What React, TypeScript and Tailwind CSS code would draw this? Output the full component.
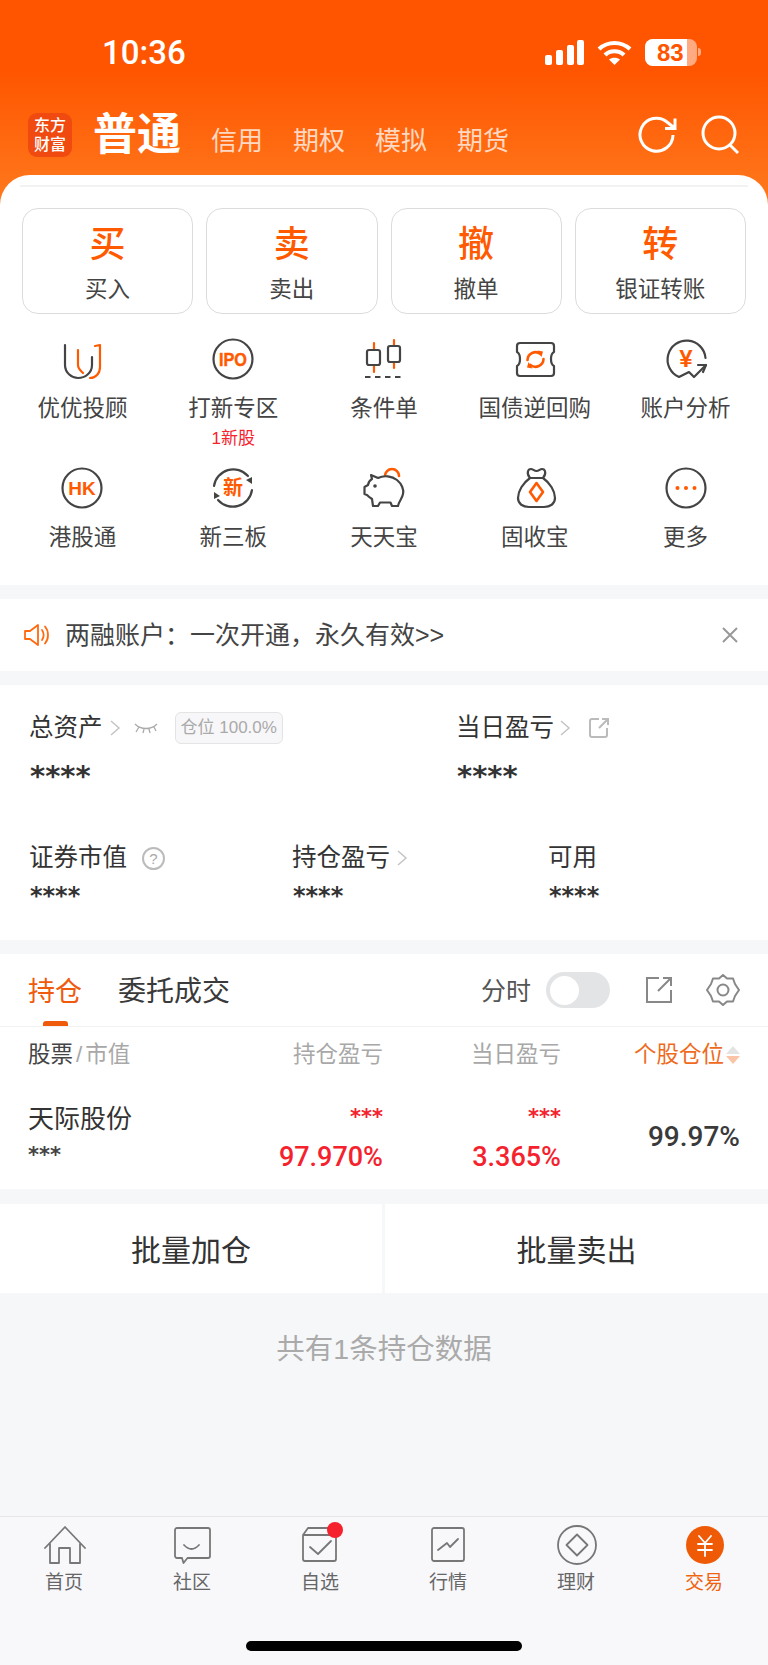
import React from 'react';

const DARK = '#444444';
const OG = '#ff5a00';

const bigActions = [
  { ch: '买', label: '买入' },
  { ch: '卖', label: '卖出' },
  { ch: '撤', label: '撤单' },
  { ch: '转', label: '银证转账' },
];

function Ico({ children, size = 44 }: { children: React.ReactNode; size?: number }) {
  return (
    <svg width={size} height={size} viewBox="0 0 44 44" fill="none" strokeLinecap="round" strokeLinejoin="round">
      {children}
    </svg>
  );
}

// 宫格图标
function IconUU() {
  return (
    <Ico>
      <path d="M5 8V28C5 36 12 41 18 41C25 41 32 36 32 28V20" stroke={DARK} strokeWidth="2.2" />
      <path d="M18 13V28C18 32 21 34 23 36" stroke={OG} strokeWidth="2.2" />
      <path d="M35 9L40 8V30C40 36 36 41 30 41" stroke={OG} strokeWidth="2.2" />
    </Ico>
  );
}
function IconIpo() {
  return (
    <Ico>
      <circle cx="22" cy="22" r="19.5" stroke={DARK} strokeWidth="2.2" />
      <text x="22" y="28.5" textAnchor="middle" fontSize="18" fontWeight="700" fill={OG} stroke={OG} strokeWidth="0.4" fontFamily="Liberation Sans" textLength="28" lengthAdjust="spacingAndGlyphs">IPO</text>
    </Ico>
  );
}
function IconCandle() {
  return (
    <Ico>
      <path d="M12 6V35M32 3V31" stroke={OG} strokeWidth="2.2" />
      <rect x="5" y="13" width="13" height="15" rx="2" fill="#fff" stroke={DARK} strokeWidth="2.2" />
      <rect x="26" y="9" width="12" height="16" rx="2" fill="#fff" stroke={DARK} strokeWidth="2.2" />
      <path d="M3 40H40" stroke={DARK} strokeWidth="2.2" strokeDasharray="5.5 4.5" strokeLinecap="butt" />
    </Ico>
  );
}
function IconTicket() {
  return (
    <Ico>
      <path d="M7 6H38a3 3 0 0 1 3 3v6c-2 1-3 4-3 7s1 6 3 7v7a3 3 0 0 1-3 3H7a3 3 0 0 1-3-3v-7c2-1 3-4 3-7s-1-6-3-7V9a3 3 0 0 1 3-3z" stroke={DARK} strokeWidth="2.2" />
      <path d="M14.5 23a8 8 0 0 1 13-6M30.5 22a8 8 0 0 1-13 6" stroke={OG} strokeWidth="2.6" />
      <path d="M24.5 13.5L30 14.5L28.5 20Z M19.5 31.5L14 30.5L15.5 25Z" fill={OG} />
    </Ico>
  );
}
function IconAccount() {
  return (
    <Ico>
      <path d="M41.5 21A19 19 0 1 0 15 40L25 35L30 40L42 28" stroke={DARK} strokeWidth="2.2" />
      <path d="M34 28H42L39 35" stroke={DARK} strokeWidth="2.2" />
      <text x="22" y="30" textAnchor="middle" fontSize="24" fontWeight="700" fill={OG} fontFamily="Liberation Sans">¥</text>
    </Ico>
  );
}
function IconHk() {
  return (
    <Ico>
      <circle cx="22" cy="22" r="19.5" stroke={DARK} strokeWidth="2.2" />
      <text x="22" y="29" textAnchor="middle" fontSize="19" fontWeight="700" fill={OG} fontFamily="Liberation Sans">HK</text>
    </Ico>
  );
}
function IconXin() {
  return (
    <Ico>
      <path d="M3 20A19.5 19.5 0 0 1 37 10M41 24A19.5 19.5 0 0 1 7 34" stroke={DARK} strokeWidth="2.2" />
      <path d="M41 11L41 18L35 14Z M3 33L3 26L9 30Z" fill={DARK} />
      <text x="22" y="29" textAnchor="middle" fontSize="20" fontWeight="700" fill={OG} fontFamily="Noto Sans CJK SC">新</text>
    </Ico>
  );
}
function IconPig() {
  return (
    <Ico>
      <path d="M23 10A7 7 0 0 1 37 10" stroke={OG} strokeWidth="2.6" />
      <path d="M9 9L16 12C22 9 30 10 35 14C40 18 42 24 41 28C40 33 37 35 36 40H30L28.5 36.5H18L16 40H11L10 33C7 31 6 30 5 29L2.5 28V21L6 19C6.5 16 8 14 10 13Z" fill="#fff" stroke={DARK} strokeWidth="2.2" />
      <circle cx="13" cy="20" r="1.8" fill={DARK} />
    </Ico>
  );
}
function IconBag() {
  return (
    <Ico>
      <path d="M17 12C13 7 15 3 18 3C20 3 21 5 23.5 5C26 5 27 3 29 3C32 3 34 7 30 12C37 17 42 25 42 32C42 38 37 41 31 41H16C10 41 5 38 5 32C5 25 10 17 17 12ZM18 12H29" stroke={DARK} strokeWidth="2.2" />
      <path d="M23.5 17L30 26L23.5 35L17 26Z" stroke={OG} strokeWidth="2.6" />
    </Ico>
  );
}
function IconMore() {
  return (
    <Ico>
      <circle cx="22" cy="22" r="19.5" stroke={DARK} strokeWidth="2.2" />
      <circle cx="13.5" cy="22" r="2" fill={OG} />
      <circle cx="22" cy="22" r="2" fill={OG} />
      <circle cx="30.5" cy="22" r="2" fill={OG} />
    </Ico>
  );
}

const gridItems = [
  { icon: <IconUU />, label: '优优投顾' },
  { icon: <IconIpo />, label: '打新专区', sub: '1新股' },
  { icon: <IconCandle />, label: '条件单' },
  { icon: <IconTicket />, label: '国债逆回购' },
  { icon: <IconAccount />, label: '账户分析' },
  { icon: <IconHk />, label: '港股通' },
  { icon: <IconXin />, label: '新三板' },
  { icon: <IconPig />, label: '天天宝' },
  { icon: <IconBag />, label: '固收宝' },
  { icon: <IconMore />, label: '更多' },
];

function Chevron() {
  return (
    <svg width="12" height="18" viewBox="0 0 12 18" fill="none" className="shrink-0">
      <path d="M2 2L10 9L2 16" stroke="#c4c4c4" strokeWidth="1.5" />
    </svg>
  );
}

function Stars({ big }: { big?: boolean }) {
  return (
    <div className={`[font-family:'DejaVu_Sans',sans-serif] font-bold text-[#333] ${big ? 'text-[29px]' : 'text-[24px]'} ml-[1px] h-[24px] leading-[24px]`}>
      ****
    </div>
  );
}

const navIcon = '#777777';
const tabs = [
  {
    label: '首页',
    icon: <path d="M3 25L23 4L43 25M8 21V40H17V25H28V40H38V21" stroke={navIcon} strokeWidth="1.8" />,
  },
  {
    label: '社区',
    icon: (
      <path d="M7 5H38a2 2 0 0 1 2 2V33a2 2 0 0 1-2 2H17.5L13.5 40L12 35H7a2 2 0 0 1-2-2V7a2 2 0 0 1 2-2zM14 22Q21.5 30 29 22" stroke={navIcon} strokeWidth="1.8" />
    ),
  },
  {
    label: '自选',
    dot: true,
    icon: (
      <path d="M5 12V36a2 2 0 0 0 2 2H36a2 2 0 0 0 2-2V12H5M5 12L10 5H32M12 24L20 31L33 18" stroke={navIcon} strokeWidth="1.8" />
    ),
  },
  {
    label: '行情',
    icon: (
      <>
        <rect x="6" y="5" width="32" height="33" rx="2" stroke={navIcon} strokeWidth="1.8" />
        <path d="M12 27L21 20L24 24L32 16" stroke={navIcon} strokeWidth="1.8" />
      </>
    ),
  },
  {
    label: '理财',
    icon: (
      <>
        <circle cx="23" cy="22" r="19" stroke={navIcon} strokeWidth="1.8" />
        <path d="M23 11.5L33.5 22L23 32.5L12.5 22Z" stroke={navIcon} strokeWidth="1.8" />
      </>
    ),
  },
  {
    label: '交易',
    active: true,
    icon: (
      <>
        <circle cx="23" cy="22" r="19" fill="#ee5a06" />
        <path d="M17 13L23 20L29 13M16 21H30M16 27H30M23 20V33" stroke="#fff" strokeWidth="1.8" />
      </>
    ),
  },
];

export default function App() {
  return (
    <div className="w-[768px] h-[1665px] flex flex-col overflow-hidden bg-[#f6f7f9] text-[#333] [font-family:'Liberation_Sans','Noto_Sans_CJK_SC',sans-serif]">
      {/* 顶部 + 宫格 */}
      <div className="bg-[linear-gradient(#ff5500_0,#ff5500_70px,#ff7a1e_205px)]">
        <div className="h-[175px] pt-[36px]">
          {/* 状态栏 */}
          <div className="h-[32px] flex items-center text-white">
            <span className="ml-[102px] mt-[2px] [font-family:Roboto,sans-serif] font-medium text-[33px] leading-[32px]">10:36</span>
            <svg className="ml-[359px]" width="39" height="25" viewBox="0 0 39 25" fill="#fff">
              <rect x="0" y="15" width="7" height="10" rx="2" />
              <rect x="11" y="10" width="7" height="15" rx="2" />
              <rect x="22" y="5" width="7" height="20" rx="2" />
              <rect x="32" y="0" width="7" height="25" rx="2" />
            </svg>
            <svg className="ml-[13px]" width="35" height="25" viewBox="0 0 35 25" fill="none" stroke="#fff" strokeWidth="4.2">
              <path d="M2 9C11 1 24 1 33 9" />
              <path d="M8 15C13 10 22 10 27 15" />
              <path d="M17.5 25L12 19.5C15 17 20 17 23 19.5Z" fill="#fff" stroke="none" />
            </svg>
            <div className="ml-[13px] w-[52px] h-[27px] rounded-[8px] bg-white/50 overflow-hidden">
              <div className="w-[42px] h-[27px] bg-white flex items-center justify-center text-[#ff5500] font-bold text-[24px] leading-[27px] pl-[9px]">83</div>
            </div>
            <div className="w-[3px] h-[8px] rounded-r-[3px] bg-white/50 ml-[1px]" />
          </div>
          {/* 导航 */}
          <div className="mt-[45px] h-[44px] flex items-center text-white">
            <div className="ml-[28px] w-[44px] h-[44px] rounded-[9px] bg-[#f04a10] flex items-center justify-center text-center text-[16px] leading-[19px] font-medium">
              东方<br />财富
            </div>
            <span className="ml-[21px] text-[44px] font-bold leading-[44px]">普通</span>
            <div className="ml-[30px] mt-[12px] flex gap-[30px] text-[26px] leading-[32px] text-white/75">
              <span>信用</span>
              <span>期权</span>
              <span>模拟</span>
              <span>期货</span>
            </div>
            <svg className="ml-auto" width="40" height="40" viewBox="0 0 40 40" fill="none" stroke="#fff" strokeWidth="3">
              <path d="M35 20A16.5 16.5 0 1 1 29 7L37 13.5M37 3.5V13.5H27" />
            </svg>
            <svg className="ml-[22px] mr-[28px]" width="40" height="40" viewBox="0 0 40 40" fill="none" stroke="#fff" strokeWidth="3">
              <circle cx="19" cy="18" r="16" />
              <path d="M30 30L38 38" />
            </svg>
          </div>
        </div>

        <div className="bg-white rounded-t-[30px] h-[410px]">
          <div className="pt-[10px]">
            <div className="h-[2px] bg-[#f2f2f2] mx-[20px]" />
          </div>
          <div className="mt-[21px] px-[22px] grid grid-cols-4 gap-[13px]">
            {bigActions.map((a) => (
              <div key={a.ch} className="h-[106px] rounded-[16px] border border-[#dcdcdc] flex flex-col items-center pt-[13px]">
                <span className="text-[36px] leading-[46px] font-medium text-[#ff5a00]">{a.ch}</span>
                <span className="mt-[7px] text-[22.5px] leading-[30px] text-[#444]">{a.label}</span>
              </div>
            ))}
          </div>
          <div className="mt-[23px] px-[7px] grid grid-cols-5 gap-y-[17px]">
            {gridItems.map((item) => (
              <div key={item.label} className="flex flex-col items-center">
                {item.icon}
                <span className="mt-[13px] text-[22.5px] leading-[30px] text-[#444]">{item.label}</span>
                {item.sub && <span className="mt-[5px] text-[17px] leading-[20px] text-[#f5222d]">{item.sub}</span>}
              </div>
            ))}
          </div>
        </div>
      </div>

      {/* 通知 */}
      <div className="mt-[14px] h-[72px] bg-white flex items-center">
        <svg className="ml-[24px]" width="26" height="24" viewBox="0 0 26 24" fill="none" stroke="#ff6a10" strokeWidth="1.8" strokeLinejoin="round">
          <path d="M1 8H6L14 2V22L6 16H1Z" />
          <path d="M18 7C20 10 20 14 18 17M21 3.5C25 8 25 16 21 20.5" strokeLinecap="round" />
        </svg>
        <span className="ml-[15px] text-[25px] leading-[34px] text-[#444]">两融账户：一次开通，永久有效&gt;&gt;</span>
        <svg className="ml-auto mr-[29px]" width="18" height="18" viewBox="0 0 18 18" stroke="#999" strokeWidth="2">
          <path d="M2 2L16 16M16 2L2 16" />
        </svg>
      </div>

      {/* 资产 */}
      <div className="mt-[14px] h-[255px] bg-white pl-[29px] pt-[26px]">
        <div className="flex">
          <div className="w-[427px]">
            <div className="h-[34px] flex items-center">
              <span className="text-[24.5px] leading-[34px]">总资产</span>
              <span className="ml-[6px]"><Chevron /></span>
              <svg className="ml-[13px]" width="24" height="12" viewBox="0 0 24 12" fill="none" stroke="#aaa" strokeWidth="1.3">
                <path d="M1 2C7 8 17 8 23 2M5 5L2 10M10 7L9 11M15 7L16 11M20 5L22 9" />
              </svg>
              <span className="ml-[17px] h-[32px] px-[5px] rounded-[6px] border border-[#e4e4e4] bg-[#f7f7f9] text-[#aaa] text-[17px] leading-[30px]">仓位 100.0%</span>
            </div>
            <div className="mt-[19px]"><Stars big /></div>
          </div>
          <div>
            <div className="h-[34px] flex items-center">
              <span className="text-[24.5px] leading-[34px]">当日盈亏</span>
              <span className="ml-[5px]"><Chevron /></span>
              <svg className="ml-[17px]" width="22" height="22" viewBox="0 0 22 22" fill="none" stroke="#bbb" strokeWidth="2">
                <path d="M11 2H4a2 2 0 0 0-2 2V18a2 2 0 0 0 2 2H17a2 2 0 0 0 2-2V11M11 11L20 2M14 2H20V8" />
              </svg>
            </div>
            <div className="mt-[19px]"><Stars big /></div>
          </div>
        </div>
        <div className="mt-[53px] flex">
          <div className="w-[263px]">
            <div className="h-[34px] flex items-center">
              <span className="text-[24.5px] leading-[34px]">证券市值</span>
              <span className="ml-[15px] w-[23px] h-[23px] rounded-full border-2 border-[#bbb] text-[#aaa] text-[15px] leading-[19px] text-center">?</span>
            </div>
            <div className="mt-[9px]"><Stars /></div>
          </div>
          <div className="w-[256px]">
            <div className="h-[34px] flex items-center">
              <span className="text-[24.5px] leading-[34px]">持仓盈亏</span>
              <span className="ml-[6px]"><Chevron /></span>
            </div>
            <div className="mt-[9px]"><Stars /></div>
          </div>
          <div>
            <div className="h-[34px] flex items-center text-[24.5px] leading-[34px]">可用</div>
            <div className="mt-[9px]"><Stars /></div>
          </div>
        </div>
      </div>

      {/* 持仓 */}
      <div className="mt-[14px] bg-white h-[235px]">
        <div className="h-[73px] border-b border-[#f2f2f2] flex items-center pl-[28px] pr-[28px] relative">
          <span className="mt-[3px] text-[27px] leading-[36px] text-[#ef5a0c]">持仓</span>
          <span className="mt-[3px] ml-[36px] text-[28px] leading-[36px] text-[#3a3a3a]">委托成交</span>
          <span className="mt-[1px] ml-auto text-[25px] leading-[36px] text-[#555]">分时</span>
          <div className="ml-[15px] w-[64px] h-[36px] rounded-full bg-[#e3e4e6] flex items-center pl-[4px]">
            <div className="w-[29px] h-[29px] rounded-full bg-white" />
          </div>
          <svg className="ml-[35px]" width="28" height="28" viewBox="0 0 28 28" fill="none" stroke="#888" strokeWidth="2">
            <path d="M14 2H2V26H26V14M13 15L26 2M18 2H26V10" />
          </svg>
          <svg className="ml-[33px]" width="34" height="32" viewBox="0 0 34 32" fill="none" stroke="#888" strokeWidth="2" strokeLinejoin="round">
            <path d="M17 1L21 4.5H27L29 10L33 16L29 22L27 27.5H21L17 31L13 27.5H7L5 22L1 16L5 10L7 4.5H13Z" />
            <circle cx="17" cy="16" r="5.5" />
          </svg>
          <div className="absolute left-[43px] bottom-0 w-[25px] h-[5px] rounded-t-[3px] bg-[#ef5a0c]" />
        </div>
        <div className="pt-[11px] px-[28px] grid grid-cols-[150px_205px_178px_179px] text-[22.5px] leading-[34px] text-[#a8a8a8]">
          <div>
            <span className="text-[#444]">股票</span>
            <span className="mx-[3px]">/</span>
            <span>市值</span>
          </div>
          <div className="text-right">持仓盈亏</div>
          <div className="text-right">当日盈亏</div>
          <div className="flex justify-end items-center text-[#ef6a1c]">
            个股仓位
            <svg className="ml-[2px]" width="14" height="18" viewBox="0 0 14 18">
              <path d="M7 0L14 8H0Z" fill="#e4e4e4" />
              <path d="M7 18L14 10H0Z" fill="#fbc4a6" />
            </svg>
          </div>
        </div>
        <div className="mt-[29px] px-[28px] grid grid-cols-[150px_205px_178px_179px]">
          <div>
            <div className="text-[26px] leading-[36px] text-[#333]">天际股份</div>
            <div className="mt-[6px] [font-family:'DejaVu_Sans',sans-serif] font-bold text-[21px] leading-[24px] text-[#444]">***</div>
          </div>
          <div className="text-right pt-[4px]">
            <div className="[font-family:'DejaVu_Sans',sans-serif] font-bold text-[21px] leading-[24px] text-[#f5222d]">***</div>
            <div className="mt-[12px] [font-family:Roboto,sans-serif] font-medium text-[27px] leading-[32px] text-[#f5222d]">97.970%</div>
          </div>
          <div className="text-right pt-[4px]">
            <div className="[font-family:'DejaVu_Sans',sans-serif] font-bold text-[21px] leading-[24px] text-[#f5222d]">***</div>
            <div className="mt-[12px] [font-family:Roboto,sans-serif] font-medium text-[27px] leading-[32px] text-[#f5222d]">3.365%</div>
          </div>
          <div className="flex items-center justify-end [font-family:Roboto,sans-serif] font-medium text-[28px] leading-[32px] text-[#3a3a3a]">99.97%</div>
        </div>
      </div>

      {/* 批量操作 */}
      <div className="mt-[15px] h-[89px] flex gap-[3px]">
        <div className="w-[382px] bg-white flex items-center justify-center pt-[3px] text-[30px] text-[#333]">批量加仓</div>
        <div className="flex-1 bg-white flex items-center justify-center pt-[3px] text-[30px] text-[#333]">批量卖出</div>
      </div>

      <div className="flex-1 pt-[37px] text-center text-[28.5px] leading-[38px] text-[#aaa]">共有1条持仓数据</div>

      {/* 底部导航 */}
      <div className="h-[149px] bg-[#f8f8fb] border-t border-[#e6e6e6] flex flex-col items-center">
        <div className="w-full grid grid-cols-6 pt-[6px]">
          {tabs.map((t) => (
            <div key={t.label} className="flex flex-col items-center relative">
              <Ico>{t.icon}</Ico>
              <span className={`mt-[3px] text-[19px] leading-[26px] ${t.active ? 'text-[#f0640f]' : 'text-[#666]'}`}>{t.label}</span>
              {t.dot && <div className="absolute left-[71px] -top-[1px] w-[16px] h-[16px] rounded-full bg-[#f5222d]" />}
            </div>
          ))}
        </div>
        <div className="mt-auto mb-[14px] w-[276px] h-[10px] rounded-full bg-black" />
      </div>
    </div>
  );
}
